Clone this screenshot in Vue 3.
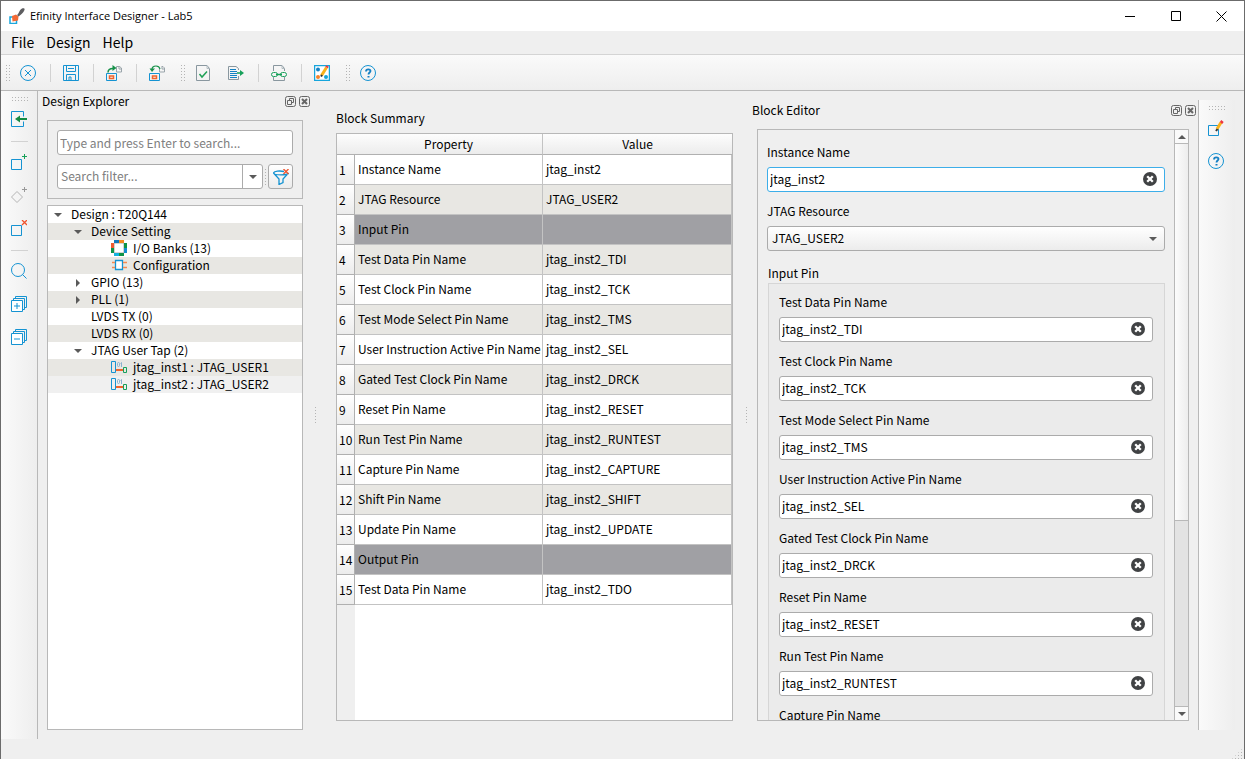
<script setup>
import { reactive, ref } from 'vue'

const icons = {
  app: '<path d="M1 9h6.500v6.500H1z" fill="#fff" stroke="#1ba7dd" stroke-width="1.500"/><path d="M3 8l4-1.500 2.500 2L9 12.500l-5.500 1z" fill="#f26a36" stroke="none"/><path d="M8 7c2-1 2-5 5-6.500 2-.5 3 0 2.500 1.500-1 3-4 5-6 6.500z" fill="#5d5d60" stroke="none"/>',
  cancel: '<circle cx="8" cy="8" r="7.500"/><path d="M5 5l6 6M11 5l-6 6"/>',
  save: '<path d="M.5.5h15v15H.5zM3.500.5v6h9v-6M5 3.500h6M3.500 15.500v-6h9v6M6 12v3.500" /><path d="M6 12h2v3"/>',
  importFile: '<path d="M.5 8.500h10v7H.5z"/><path d="M3.500 11h4v2.500h-4z" stroke="#f0642d" stroke-width="1.500"/><path d="M10.500 1.500V7h5V3l-2-1.500zM13 1v3h2.500" stroke="#9aa5ab"/><path d="M2 7.500c0-3 2-4 5-4" stroke="#17914a" stroke-width="1.500"/><path d="M6.500 0l4 3-4 3z" fill="#17914a" stroke="none"/>',
  exportFile: '<path d="M.5 8.500h10v7H.5z"/><path d="M3.500 11h4v2.500h-4z" stroke="#f0642d" stroke-width="1.500"/><path d="M13 1.500h1l1.500 1.500v4h-5V4M13 1v3h2.500" stroke="#9aa5ab"/><path d="M3 4.500c0-2.500 2-3.500 4-3.500s3.500 1 4 3" stroke="#17914a" stroke-width="1.200"/><path d="M.5 3.500h5.500l-3 3.500z" fill="#17914a" stroke="none"/>',
  check: '<path d="M1.500.5h10.500l2.500 3v12h-13z" stroke="#89979f"/><path d="M12 .5v3h2.500" stroke="#b3bdc2"/><path d="M4.500 9l2.500 3 5-5.500" stroke="#1fa055" stroke-width="1.500"/>',
  report: '<path d="M8 1.500H.5v13h10V11M10.500 5V3.500L8 1.500" stroke="#89979f"/><path d="M2 4.500h6M2 6.500h7M2 8.500h7M2 10.500h7M2 12.500h7" stroke="#1382c4"/><path d="M9 8h4" stroke="#17a05a" stroke-width="1.500"/><path d="M12 5l4 3-4 3z" fill="#17a05a" stroke="none"/>',
  link: '<path d="M2.500 6V.5H11l2.500 3V6M2.500 12v3.500h11V12" stroke="#89979f"/><path d="M11 .5v3h2.500" stroke="#b3bdc2"/><path d="M5 9.500h6" stroke="#17a05a" stroke-width="1.500"/><rect x=".5" y="7.500" width="6" height="4" rx="2" stroke="#17a05a"/><rect x="9.500" y="7.500" width="6" height="4" rx="2" stroke="#17a05a"/>',
  planner: '<path d="M.5.5h15v15H.5z" fill="#fff" stroke="#16a5dc" stroke-width="1.500"/><g stroke="none"><circle cx="4" cy="4.500" r="2" fill="#1682c5"/><circle cx="4" cy="12" r="2" fill="#f5822a"/><circle cx="12" cy="12" r="2" fill="#16a5dc"/></g><path d="M7.500 10.500l5-8" stroke="#f9b21a" stroke-width="3"/><path d="M7 11.500l1-1.500" stroke="#333" stroke-width="2"/><path d="M12.500 2.500l1-1.500" stroke="#ee3440" stroke-width="3"/>',
  help: '<circle cx="8" cy="8" r="7.500"/><path d="M6 6.500c0-3 4.500-2.500 4.500-.5C10.500 7.500 8.500 7.500 8.500 9.500" stroke-width="1.800" stroke="#1480c4"/><path d="M7.500 11h2v1.500h-2z" fill="#1480c4" stroke="none"/>',
  open: '<path d="M12.500 5.500v-5H.5v15h12v-5"/><path d="M7 8h9" stroke="#148a43" stroke-width="2"/><path d="M4 8l5-3.500v7z" fill="#148a43" stroke="none"/>',
  addBlock: '<path d="M.5 5.500h10v10H.5z"/><path d="M13.500 0v5M11 2.500h5" stroke="#17a05a"/>',
  addDiamond: '<path d="M6 4.500l5.500 5.500L6 15.500.5 10z" stroke="#b4b4b4"/><path d="M13.500 0v5M11 2.500h5" stroke="#999"/>',
  removeBlock: '<path d="M.5 5.500h10v10H.5z"/><path d="M11 0l5 5M16 0l-5 5" stroke="#f0532d" stroke-width="1.300"/>',
  search: '<circle cx="7" cy="7" r="6.500"/><path d="M11.500 11.500l4 4"/>',
  expand: '<path d="M2.500 4V2.500h11v11H12M4.500 2V.5h11v11H14"/><path d="M.5 4.500h11v11H.5z" fill="#fff"/><path d="M6 7v6M3 10h6"/>',
  collapse: '<path d="M2.500 4V2.500h11v11H12M4.500 2V.5h11v11H14"/><path d="M.5 4.500h11v11H.5z" fill="#fff"/><path d="M3 10h6"/>',
  edit: '<path d="M.5 5.500h10v10H.5z"/><path d="M9 9l4-6.500" stroke="#f9b21a" stroke-width="3"/><path d="M8 11l1.500-2" stroke="#333" stroke-width="2"/><path d="M13 3l1.500-2" stroke="#ee3440" stroke-width="3"/>',
  filter: '<path d="M11 2.500C7 1.500 1 2 .5 4c0 2.500 14.500 2.500 15 0M.5 4L6 10v5.500l4-2V10l5.500-6" stroke-width="1.300"/><path d="M10.500 0l5 5M15.500 0l-5 5" stroke="#f0532d" stroke-width="1.300"/>',
  banks: '<path d="M3 3h10v10H3z" fill="#fff" stroke="#aaa"/><g stroke-width="3"><path d="M3 1.500h5" stroke="#1478be"/><path d="M8 1.500h5" stroke="#f58a1f"/><path d="M1.500 3v5" stroke="#ef5a30"/><path d="M1.500 8v5" stroke="#0e9448"/><path d="M14.500 3v5" stroke="#0e9448"/><path d="M14.500 8v5" stroke="#138ed0"/><path d="M3 14.500h5" stroke="#13b2df"/><path d="M8 14.500h5" stroke="#0e9448"/></g>',
  config: '<path d="M4.500 3.500h7v9h-7z" fill="#fff" stroke-width="1.300"/><path d="M1 5.500h3M1 10.500h3M12 5.500h4M12 10.500h4" stroke="#f58a50" stroke-width="1.500"/>',
  jtag: '<path d="M.5 2.500h4v11h-4z"/><path d="M5 11h7" stroke="#f0642d" stroke-width="2"/><path d="M12.500 8.500h3v5h-3z" stroke="#17a05a"/><rect x="6.500" y="3.500" width="2" height="4" rx="1" stroke="#8ab2cf"/><path d="M9.500 4.500l1-1v4.500" stroke="#8ab2cf"/>',
  float: '<rect x=".5" y=".5" width="10" height="10" rx="2"/><path d="M4.500 4.500v-2h4v4h-2M2.500 4.500h4v4h-4z"/>',
  closeDock: '<rect x=".5" y=".5" width="10" height="10" rx="2"/><path d="M3 3l5 5M8 3L3 8" stroke-width="2"/>',
  clear: '<circle cx="7" cy="7" r="7" fill="#404244" stroke="none"/><path d="M4.200 4.200l5.600 5.600M9.800 4.200l-5.600 5.600" stroke="#fff" stroke-width="2.300"/>'
}

const mainTools = [
  { icon: 'cancel', label: 'Close design' }, 'sep',
  { icon: 'save', label: 'Save' }, 'sep',
  { icon: 'importFile', label: 'Import' }, 'sep',
  { icon: 'exportFile', label: 'Export' }, 'grip',
  { icon: 'check', label: 'Check design' }, 'gap',
  { icon: 'report', label: 'Generate report' }, 'sep',
  { icon: 'link', label: 'Resource assigner' }, 'sep',
  { icon: 'planner', label: 'Planner' }, 'grip',
  { icon: 'help', label: 'Help' }
]
const sideTools = [
  { icon: 'open', label: 'Show block' }, 'sep',
  { icon: 'addBlock', label: 'Create block' }, 'gap',
  { icon: 'addDiamond', label: 'Create bus' }, 'gap',
  { icon: 'removeBlock', label: 'Delete block' }, 'sep',
  { icon: 'search', label: 'Find' }, 'gap',
  { icon: 'expand', label: 'Expand all' }, 'gap',
  { icon: 'collapse', label: 'Collapse all' }
]
const editTools = [{ icon: 'edit', label: 'Edit block' }, 'gap', { icon: 'help', label: 'Block help' }]

const tree = [
  { depth: 0, text: 'Design : T20Q144', state: 'open' },
  { depth: 1, text: 'Device Setting', state: 'open' },
  { depth: 2, text: 'I/O Banks (13)', icon: 'banks' },
  { depth: 2, text: 'Configuration', icon: 'config' },
  { depth: 1, text: 'GPIO (13)', state: 'closed' },
  { depth: 1, text: 'PLL (1)', state: 'closed' },
  { depth: 1, text: 'LVDS TX (0)' },
  { depth: 1, text: 'LVDS RX (0)' },
  { depth: 1, text: 'JTAG User Tap (2)', state: 'open' },
  { depth: 2, text: 'jtag_inst1 : JTAG_USER1', icon: 'jtag' },
  { depth: 2, text: 'jtag_inst2 : JTAG_USER2', icon: 'jtag', selected: true }
]

const rows = [
  ['Instance Name', 'jtag_inst2'],
  ['JTAG Resource', 'JTAG_USER2'],
  ['Input Pin'],
  ['Test Data Pin Name', 'jtag_inst2_TDI'],
  ['Test Clock Pin Name', 'jtag_inst2_TCK'],
  ['Test Mode Select Pin Name', 'jtag_inst2_TMS'],
  ['User Instruction Active Pin Name', 'jtag_inst2_SEL'],
  ['Gated Test Clock Pin Name', 'jtag_inst2_DRCK'],
  ['Reset Pin Name', 'jtag_inst2_RESET'],
  ['Run Test Pin Name', 'jtag_inst2_RUNTEST'],
  ['Capture Pin Name', 'jtag_inst2_CAPTURE'],
  ['Shift Pin Name', 'jtag_inst2_SHIFT'],
  ['Update Pin Name', 'jtag_inst2_UPDATE'],
  ['Output Pin'],
  ['Test Data Pin Name', 'jtag_inst2_TDO']
]

const instanceName = ref('jtag_inst2')
const resource = ref('JTAG_USER2')
const pins = reactive(rows.slice(3, 11).map(([label, value]) => ({ label, value })))
</script>

<template>
  <div class="window">
    <header class="titlebar">
      <svg class="icon" viewBox="0 0 16 16" v-html="icons.app" />
      <span class="title">Efinity Interface Designer - Lab5</span>
      <button class="caption" aria-label="Minimize"><svg viewBox="0 0 11 11"><path d="M0 5.500h10" /></svg></button>
      <button class="caption" aria-label="Maximize"><svg viewBox="0 0 11 11"><path d="M.5.5h9v9h-9z" /></svg></button>
      <button class="caption" aria-label="Close"><svg viewBox="0 0 11 11"><path d="M.5.5l10 10M10.500.5l-10 10" /></svg></button>
    </header>
    <nav class="menubar">
      <button>File</button><button>Design</button><button>Help</button>
    </nav>
    <div class="toolbar">
      <i class="grip" />
      <template v-for="(t, i) in mainTools" :key="i">
        <i v-if="typeof t === 'string'" :class="t" />
        <button v-else class="tool" :aria-label="t.label"><svg class="icon" viewBox="0 0 16 16" v-html="icons[t.icon]" /></button>
      </template>
    </div>

    <div class="workspace">
      <div class="toolbar side">
        <i class="grip" />
        <template v-for="(t, i) in sideTools" :key="i">
          <i v-if="typeof t === 'string'" :class="t" />
          <button v-else class="tool" :aria-label="t.label"><svg class="icon" viewBox="0 0 16 16" v-html="icons[t.icon]" /></button>
        </template>
      </div>

      <section class="dock explorer">
        <div class="dock-title">
          <span>Design Explorer</span>
          <button class="tiny" aria-label="Float explorer"><svg viewBox="0 0 11 11" v-html="icons.float" /></button>
          <button class="tiny" aria-label="Close explorer"><svg viewBox="0 0 11 11" v-html="icons.closeDock" /></button>
        </div>
        <div class="dock-body">
          <div class="search-box">
            <input class="line-edit" aria-label="Search" placeholder="Type and press Enter to search..." />
            <div class="filter-row">
              <div class="combo">
                <input aria-label="Search filter" placeholder="Search filter..." />
                <button aria-label="Show filters"><i class="arrow-down" /></button>
              </div>
              <i class="mini-grip" />
              <button class="filter-btn" aria-label="Clear filter"><svg class="icon" viewBox="0 0 16 16" v-html="icons.filter" /></button>
            </div>
          </div>
          <ul class="tree">
            <li v-for="n in tree" :key="n.text" :class="['d' + n.depth, { selected: n.selected }]">
              <button class="twisty" v-if="n.state" :aria-label="'Toggle ' + n.text"><i :class="n.state === 'open' ? 'arrow-down' : 'arrow-right'" /></button>
              <i v-else-if="n.depth < 2" class="twisty" />
              <svg v-if="n.icon" class="icon" viewBox="0 0 16 16" v-html="icons[n.icon]" />
              <span>{{ n.text }}</span>
            </li>
          </ul>
        </div>
      </section>

      <i class="splitter" />

      <main class="central">
        <section class="summary">
          <h2>Block Summary</h2>
          <div class="table-frame">
            <table>
              <colgroup><col class="c-num" /><col class="c-prop" /><col /></colgroup>
              <thead><tr><td></td><th>Property</th><th>Value</th></tr></thead>
              <tbody>
                <tr v-for="(r, i) in rows" :key="i" :class="{ group: r.length === 1 }">
                  <th>{{ i + 1 }}</th><td>{{ r[0] }}</td><td>{{ r[1] }}</td>
                </tr>
              </tbody>
            </table>
          </div>
        </section>

        <i class="splitter" />

        <section class="dock editor">
          <div class="dock-title">
            <span>Block Editor</span>
            <button class="tiny" aria-label="Float editor"><svg viewBox="0 0 11 11" v-html="icons.float" /></button>
            <button class="tiny" aria-label="Close editor"><svg viewBox="0 0 11 11" v-html="icons.closeDock" /></button>
          </div>
          <div class="dock-body">
            <div class="scroll-area">
              <form class="form" @submit.prevent>
                <label for="inst">Instance Name</label>
                <div class="field active">
                  <input id="inst" v-model="instanceName" />
                  <button type="button" aria-label="Clear instance name" @click="instanceName = ''"><svg viewBox="0 0 14 14" v-html="icons.clear" /></button>
                </div>
                <label for="res">JTAG Resource</label>
                <div class="select">
                  <select id="res" v-model="resource"><option>JTAG_USER1</option><option>JTAG_USER2</option></select>
                  <i class="arrow-down" />
                </div>
                <fieldset>
                  <legend>Input Pin</legend>
                  <div class="pins">
                    <template v-for="(p, i) in pins" :key="i">
                      <label :for="'pin' + i">{{ p.label }}</label>
                      <div class="field">
                        <input :id="'pin' + i" v-model="p.value" />
                        <button type="button" :aria-label="'Clear ' + p.label" @click="p.value = ''"><svg viewBox="0 0 14 14" v-html="icons.clear" /></button>
                      </div>
                    </template>
                  </div>
                </fieldset>
              </form>
              <div class="scrollbar">
                <button aria-label="Scroll up"><i class="arrow-up" /></button>
                <div class="track"><div class="thumb" /></div>
                <button aria-label="Scroll down"><i class="arrow-down" /></button>
              </div>
            </div>
          </div>
        </section>

        <div class="toolbar side right">
          <i class="grip" />
          <template v-for="(t, i) in editTools" :key="i">
            <i v-if="typeof t === 'string'" :class="t" />
            <button v-else class="tool" :aria-label="t.label"><svg class="icon" viewBox="0 0 16 16" v-html="icons[t.icon]" /></button>
          </template>
        </div>
      </main>
    </div>
    <footer class="statusbar"><i class="size-grip" /></footer>
  </div>
</template>

<style>
body {
  margin: 0;
}
</style>

<style scoped>
* {
  box-sizing: border-box;
}
.window {
  --dots: conic-gradient(at 1px 1px, transparent 75%, #b4b4b4 0);
  display: flex;
  flex-direction: column;
  height: 100vh;
  overflow: hidden;
  border: 1px solid #6b6b6b;
  border-bottom: 0;
  background: #efefef;
  color: #000;
  font: 12px/20px "Noto Sans CJK SC", "Noto Sans", sans-serif;
}
button, input, select {
  margin: 0;
  padding: 0;
  border: 0;
  background: none;
  color: inherit;
  font: inherit;
  outline: 0;
}
button {
  display: flex;
  align-items: center;
  justify-content: center;
}
svg {
  display: block;
  fill: none;
  stroke: #1593d2;
  flex: none;
}
.icon {
  width: 16px;
  height: 16px;
}
.titlebar {
  display: flex;
  align-items: center;
  flex: none;
  height: 30px;
  padding-left: 8px;
  background: #fff;
}
.title {
  flex: 1;
  margin-left: 5px;
  font-family: "Open Sans", sans-serif;
  font-size: 11px;
}
.caption {
  width: 46px;
  height: 30px;
}
.caption:last-child {
  width: 45px;
}
.caption svg {
  width: 11px;
  height: 11px;
  stroke: #000;
}
.menubar {
  display: flex;
  flex: none;
  height: 24px;
  padding: 0 4px 2px;
  border-bottom: 1px solid #d4d4d4;
  font-size: 14px;
}
.menubar button {
  padding: 0 6px;
}
.toolbar {
  display: flex;
  align-items: center;
  flex: none;
  height: 36px;
  border-bottom: 1px solid #b8b8b8;
  background: linear-gradient(#fafafa, #eee);
}
.tool {
  width: 16px;
  height: 16px;
}
.sep {
  width: 27px;
  height: 18px;
  background: linear-gradient(#d2d2d2, #d2d2d2) 14px 0 / 1px 100% no-repeat;
}
.gap {
  width: 17px;
  height: 17px;
}
.grip {
  display: flex;
  justify-content: center;
  align-items: center;
  width: 30px;
  height: 18px;
  padding-left: 6px;
}
.grip::before {
  content: "";
  width: 4px;
  height: 16px;
  background: var(--dots) 0 0 / 3px 3px;
}
.toolbar > .grip:first-child {
  justify-content: flex-start;
  width: 19px;
  padding-left: 5px;
}
.workspace {
  display: flex;
  flex: 1;
  min-height: 0;
}
.side {
  flex-direction: column;
  align-items: flex-start;
  width: 37px;
  height: auto;
  padding-left: 10px;
  border-bottom: 0;
  border-right: 1px solid #b8b8b8;
  background: linear-gradient(90deg, #fafafa, #eee);
}
.side .sep {
  width: 17px;
  height: 27px;
  background: linear-gradient(#d2d2d2, #d2d2d2) 0 14px / 100% 1px no-repeat;
}
.side > .grip:first-child {
  align-items: flex-start;
  width: 18px;
  height: 20px;
  padding: 6px 0 0 1px;
}
.side .grip::before {
  width: 16px;
  height: 4px;
}
.right {
  width: 37px;
  padding-left: 9px;
  border-right: 0;
  border-left: 1px solid #b8b8b8;
}
.dock {
  display: flex;
  flex-direction: column;
}
.explorer {
  flex: none;
  width: 273px;
}
.dock-title {
  display: flex;
  align-items: center;
  gap: 3px;
  flex: none;
  height: 21px;
  padding: 0 1px 0 4px;
}
.dock-title span {
  flex: 1;
  height: 21px;
}
.editor .dock-title {
  padding-right: 2px;
}
.tiny, .tiny svg {
  width: 11px;
  height: 11px;
  stroke: #666;
}
.dock-body {
  display: flex;
  flex-direction: column;
  gap: 6px;
  flex: 1;
  min-height: 0;
  padding: 8px 8px 9px 9px;
}
.search-box {
  display: flex;
  flex-direction: column;
  gap: 9px;
  padding: 9px;
  border: 1px solid #b8b8b8;
}
.line-edit, .combo, .field, .select, .filter-btn {
  height: 25px;
  border: 1px solid #ababab;
  border-radius: 3px;
  background: #fff;
}
.line-edit {
  width: 100%;
  padding: 0 2px 1px;
}
::placeholder {
  color: #808080;
  opacity: 1;
}
.filter-row {
  display: flex;
  align-items: center;
}
.combo {
  display: flex;
  flex: 1;
  min-width: 0;
}
.combo input {
  flex: 1;
  min-width: 0;
  padding: 0 0 1px 3px;
}
.combo button {
  width: 20px;
  border-left: 1px solid #ababab;
}
.mini-grip {
  width: 5px;
  height: 16px;
  background: var(--dots) 2px 0 / 3px 3px;
}
.filter-btn {
  width: 25px;
  background: linear-gradient(#fff, #ececec);
}
.arrow-down, .arrow-up {
  width: 0;
  height: 0;
  border: 4px solid transparent;
  border-bottom-width: 0;
  border-top-color: #5a5a5a;
}
.arrow-up {
  border-width: 0 4px 4px;
  border-bottom-color: #5a5a5a;
}
.arrow-right {
  width: 0;
  height: 0;
  border: 4px solid transparent;
  border-right-width: 0;
  border-left-color: #5a5a5a;
}
.tree {
  flex: 1;
  min-height: 0;
  margin: 0;
  padding: 0;
  border: 1px solid #b8b8b8;
  background: #fff;
  list-style: none;
  line-height: 16px;
  overflow: hidden;
}
.tree li {
  display: flex;
  align-items: flex-start;
  height: 17px;
}
.tree li:nth-child(even) {
  background: #e8e7e3;
}
.tree li.selected {
  background: #f0f0f0;
}
.twisty {
  width: 20px;
  height: 17px;
}
.tree .icon {
  margin-right: 6px;
}
.tree span {
  padding-left: 3px;
}
.tree .icon + span {
  padding-left: 0;
}
.tree .d1 {
  padding-left: 20px;
}
.tree .d2 {
  padding-left: 63px;
}
.splitter {
  align-self: center;
  flex: none;
  width: 6px;
  height: 16px;
  background: var(--dots) 4px 0 / 6px 3px;
}
.central {
  display: flex;
  flex: 1;
  min-width: 0;
  padding: 9px 9px 9px 0;
}
.summary {
  display: flex;
  flex-direction: column;
  flex: 1 1 425px;
  min-width: 0;
  padding: 8px 9px 9px 19px;
}
h2 {
  flex: none;
  height: 25px;
  margin: 0;
  font: inherit;
}
.table-frame {
  flex: 1;
  min-height: 0;
  overflow: hidden;
  border: 1px solid #b8b8b8;
  background: linear-gradient(90deg, #efefef 18px, #fff 18px);
}
table {
  width: 100%;
  table-layout: fixed;
  border-spacing: 0;
}
.c-num {
  width: 18px;
}
.c-prop {
  width: 188px;
}
td, th {
  height: 27px;
  padding: 0 3px 2px;
  border: 0 solid #c3c3c3;
  border-width: 0 1px 1px 0;
  font-weight: 400;
  text-align: left;
  line-height: 20px;
  white-space: nowrap;
  box-sizing: content-box;
}
thead td, thead th {
  height: 20px;
  padding: 0;
  border-bottom-color: #b0b0b0;
  background: linear-gradient(#fdfdfd, #ececec);
  text-align: center;
}
thead td, thead th:last-child {
  border-right: 0;
}
tbody td {
  background: #fff;
}
tbody th {
  padding: 0 0 0 2px;
  border-color: #b0b0b0;
  background: linear-gradient(#fff, #ececec);
}
tbody tr:nth-child(even) td {
  background: #e8e7e3;
}
tbody tr.group td {
  background: #a0a0a4;
}
.editor {
  flex: 1 1 450px;
  min-width: 0;
}
.editor .dock-body {
  padding-right: 9px;
}
.scroll-area {
  display: flex;
  flex: 1;
  min-height: 0;
  border: 1px solid #b8b8b8;
  overflow: hidden;
}
.form {
  flex: 1;
  min-width: 0;
  padding: 12px 9px 0;
}
label {
  display: block;
  margin: 9px 0 5px;
}
.form > label:first-child, .pins > label:first-child {
  margin-top: 0;
}
.field, .select {
  display: flex;
  align-items: center;
}
.field input {
  flex: 1;
  min-width: 0;
  padding: 0 0 1px 2px;
}
.field button {
  width: 14px;
  height: 14px;
  margin: 0 7px 1px 0;
}
.field svg {
  width: 14px;
  height: 14px;
}
.field.active {
  border-color: #3daee9;
}
.select {
  position: relative;
  background: linear-gradient(#fff, #ececec);
}
select {
  flex: 1;
  height: 23px;
  padding: 0 0 1px 4px;
  appearance: none;
}
.select i {
  position: absolute;
  right: 7px;
  pointer-events: none;
}
fieldset {
  margin: 12px 0 0;
  padding: 0;
  border: 0;
}
legend {
  padding: 0 1px;
}
.pins {
  margin-left: 1px;
  padding: 8px 11px;
  border: 1px solid #d6d6d6;
  padding-left: 10px;
  background: #ebebeb;
}
.scrollbar {
  display: flex;
  flex-direction: column;
  flex: none;
  width: 14px;
  border-left: 1px solid #b8b8b8;
  background: #fafafa;
}
.scrollbar button {
  flex: none;
  height: 13px;
}
.track {
  flex: 1;
  border: 1px solid #b8b8b8;
  border-width: 1px 0;
  background: #e3e3e3;
}
.thumb {
  height: 67%;
  border-bottom: 1px solid #b8b8b8;
  background: linear-gradient(90deg, #fcfcfc, #ededed);
}
.statusbar {
  display: flex;
  justify-content: flex-end;
  align-items: flex-end;
  flex: none;
  height: 20px;
  padding-right: 2px;
}
.size-grip {
  width: 10px;
  height: 10px;
  background: var(--dots) 0 0 / 3px 3px;
  clip-path: polygon(100% 0, 100% 100%, 0 100%);
}
</style>
